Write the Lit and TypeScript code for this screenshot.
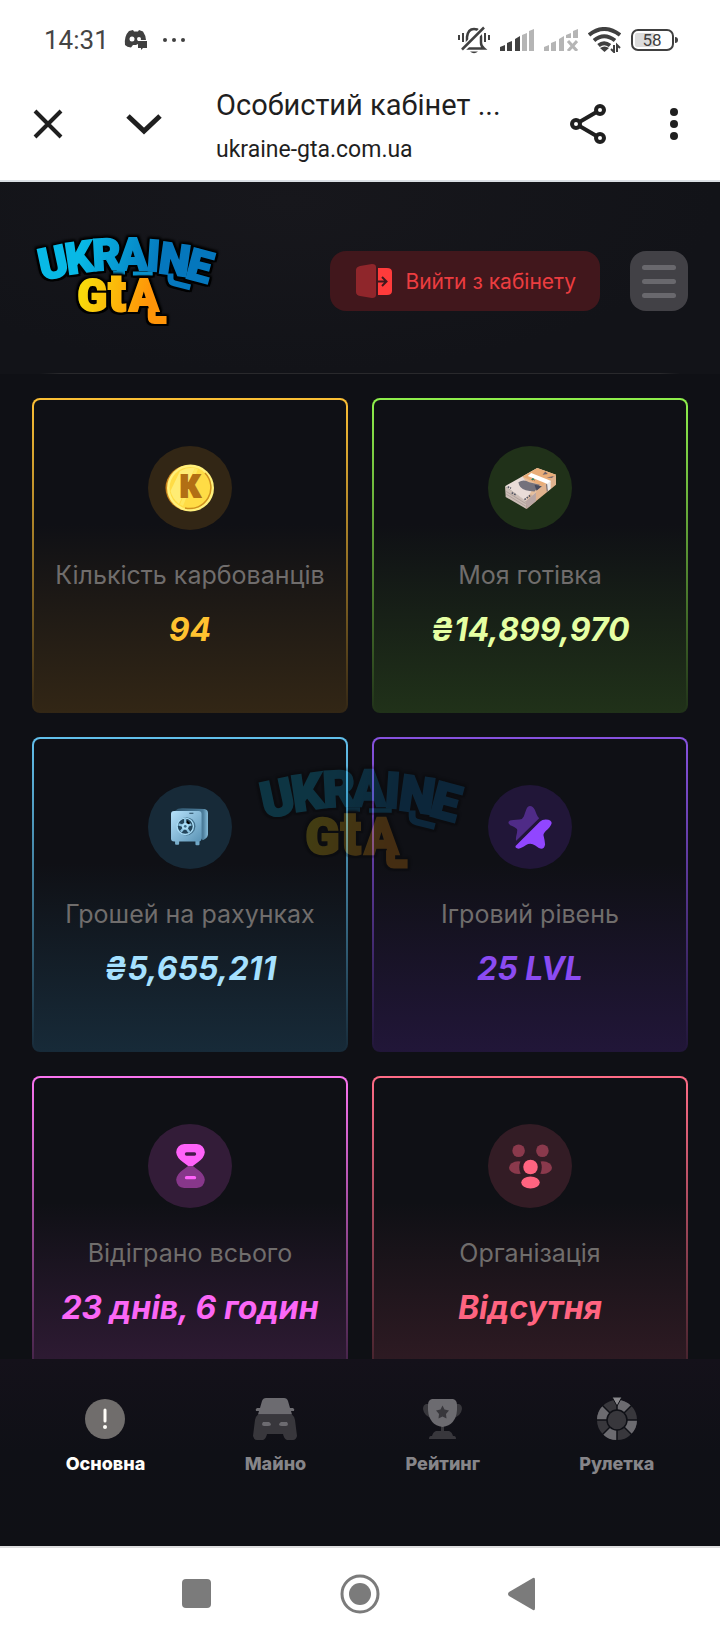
import {LitElement, html, css, svg} from 'lit';
import {customElement, property, state} from 'lit/decorators.js';
import {classMap} from 'lit/directives/class-map.js';

const icons = {
  coin: svg`
    <svg width="50" height="48" viewBox="0 0 50 48">
      <ellipse cx="24" cy="24" rx="23.5" ry="23" fill="#c9831c" />
      <ellipse cx="25.5" cy="24" rx="23.5" ry="23.5" fill="#fff07c" />
      <ellipse cx="25.5" cy="24" rx="21" ry="21" fill="#ffdc45" />
      <path d="M15 7 Q22 3 30 4 L14 40 Q7 34 5.500 27Z" fill="#ffec74" />
      <path d="M33 5 L18 42 L15 40.500 L30 4Z" fill="#ffe860" />
      <path d="M40 9 A21 21 0 0 1 20 44" fill="none" stroke="#cf901f" stroke-width="1.500" />
      <text x="25" y="33" font-family="Roboto, sans-serif" font-size="31" font-weight="900"
        text-anchor="middle" fill="#b26f14" stroke="#b26f14" stroke-width="2">К</text>
    </svg>`,
  money: svg`
    <svg width="51" height="41" viewBox="0 0 152 122">
      <path d="M0 54 L2 86 L64 122 L62 96Z" fill="#cbbcb6" />
      <path d="M62 96 L64 122 L152 50 V20Z" fill="#e0b28e" />
      <path d="M62 96 L64 122 L92 99 V72Z" fill="#b9a6a4" />
      <path d="M0 54 L96 0 L152 20 L62 98Z" fill="#e9dcd8" />
      <path d="M52 25 L96 0 L152 20 L92 72 L84 50Z" fill="#e9ad78" />
      <path d="M52 25 L88 44 L110 54 L92 72 L62 98 L80 66Z" fill="#e6bf9d" />
      <path d="M40 42 Q56 32 72 42 L104 50 L88 70 Q72 68 62 66 Q42 60 40 42Z" fill="#74727c" />
      <path d="M88 50 L110 54 L94 68Z" fill="#474a5c" />
      <path d="M112 20 L120 10 L128 18Z M124 28 L146 24 L140 30Z" fill="#70636c" />
      <path d="M68 24 L78 15 L136 38 L132 50Z" fill="#fff" />
      <path d="M124 48 L136 38 L136 62 L126 70Z" fill="#eceae9" />
      <path d="M124 48 L126 70" stroke="#665f65" stroke-width="3" fill="none" />
      <path d="M4 70 L62 106 M4 78 L62 114" stroke="#a3958f" stroke-width="2" fill="none" />
      <path d="M8 56 l10 4 M20 74 l12 6 M58 94 l20 -14 M80 33 l8 4" stroke="#555663" stroke-width="5" stroke-dasharray="5 3" />
      <path d="M78 34 l6 -4 l4 6 Z" fill="#1e8d63" />
    </svg>`,
  safe: svg`
    <svg width="38" height="38" viewBox="0 0 112 112">
      <defs>
        <linearGradient id="door" x1="0" y1="0" x2="1" y2="1">
          <stop offset="0" stop-color="#b6e2fb" />
          <stop offset="1" stop-color="#5a93b5" />
        </linearGradient>
        <linearGradient id="side" x1="0" y1="0" x2="1" y2="0">
          <stop offset="0" stop-color="#31566e" />
          <stop offset="0.850" stop-color="#4c7d9b" />
          <stop offset="1" stop-color="#88bedb" />
        </linearGradient>
      </defs>
      <path d="M12 8 Q20 0 36 1 L98 3 Q109 4 109 15 V78 Q108 88 94 95Z" fill="url(#side)" />
      <rect x="12" y="94" width="12" height="14" rx="3" fill="#79aecb" />
      <rect x="72" y="94" width="12" height="16" rx="3" fill="#6fa6c5" />
      <rect x="0" y="9" width="90" height="90" rx="9" fill="url(#door)" />
      <path d="M54 14 H66 V17 H54Z" fill="#24475e" />
      <circle cx="45" cy="54" r="27" fill="#42708c" />
      <circle cx="42" cy="54" r="24" fill="#23455b" stroke="#a9dcf6" stroke-width="4" />
      <path d="M42 32 V54 L60 48 M42 54 L54 72 M42 54 L29 70 M42 54 L22 48" stroke="#8cc4e2" stroke-width="7" />
      <circle cx="42" cy="54" r="10" fill="#a9dcf6" />
      <circle cx="42" cy="54" r="4" fill="#3b6985" />
    </svg>`,
  star: svg`
    <svg width="44" height="43" viewBox="0 0 132 131">
      <path d="M66 0C72 0 77 4 81 12C85 22 88 32 94 37L24 106Q22 104 24 92Q29 72 26 70Q22 66 6 59Q-5 50 5 44Q12 42 34 41Q44 40 47 32L54 12Q58 0 66 0Z" fill="#4f2b87" />
      <path d="M22 122L96 48Q103 41 114 41Q132 42 132 52Q131 60 120 71Q106 83 107 89Q111 104 112 117Q110 130 100 130Q93 129 82 120Q67 110 54 119Q40 129 31 130Q20 129 22 122Z" fill="#9146ff" />
    </svg>`,
  hourglass: svg`
    <svg width="29" height="44" viewBox="0 0 86 132">
      <path d="M24 0H62Q84 2 86 25Q84 42 66 54L50 66H36L20 54Q2 42 0 25Q2 2 24 0Z" fill="#ff62fa" />
      <path d="M24 132H62Q84 130 86 107Q84 90 66 78L50 66H36L20 78Q2 90 0 107Q2 130 24 132Z" fill="#87378a" />
      <rect x="26" y="25" width="34" height="10" rx="5" fill="#45194a" />
      <rect x="26" y="96" width="34" height="10" rx="5" fill="#ff62fa" />
    </svg>`,
  people: svg`
    <svg width="43" height="45" viewBox="0 0 130 135">
      <g fill="#8a394c">
        <circle cx="29" cy="20" r="19" />
        <circle cx="101" cy="20" r="19" />
        <ellipse cx="28" cy="71" rx="28" ry="19" />
        <ellipse cx="102" cy="71" rx="28" ry="19" />
      </g>
      <ellipse cx="65" cy="70" rx="34" ry="40" fill="#331c25" />
      <circle cx="65" cy="69" r="22" fill="#ff6480" />
      <ellipse cx="65" cy="116" rx="28" ry="18" fill="#ff6480" />
    </svg>`,
  main: svg`
    <svg width="40" height="40" viewBox="0 0 40 40">
      <circle cx="20" cy="20" r="20" fill="#706d6c" />
      <path d="M20 11V22" stroke="#fffdf8" stroke-width="3" stroke-linecap="round" />
      <circle cx="20" cy="28" r="2" fill="#fffdf8" />
    </svg>`,
  car: svg`
    <svg width="44" height="42" viewBox="0 0 44 42">
      <path d="M7 10L9 3Q10 0 13 0H31Q34 0 35 3L37 10H40Q42 11 41 13H38L39 16.500H5L6 13H3Q2 11 4 10Z" fill="#6c6b70" />
      <path d="M5 16.500H39Q41 18 42 22L44 38Q43 42 40 42H34Q31 41 30 36H14Q13 41 10 42H4Q1 42 0 38L2 22Q3 18 5 16.500Z" fill="#38373c" />
      <path d="M10 24H16Q18 25 18 27Q17 28 15 28H11Q9 28 9 26ZM34 24H28Q26 25 26 27Q27 28 29 28H33Q35 28 35 26Z" fill="#6c6b70" />
    </svg>`,
  trophy: svg`
    <svg width="39" height="40" viewBox="0 0 39 40">
      <path d="M7 5H3Q0 6 0 10Q1 17 9 19ZM32 5H36Q39 6 39 10Q38 17 30 19ZM18 26H21V32H18ZM13 32H26Q29 33 30 37H31Q33 37 33 40H6Q6 37 8 37H9Q10 33 13 32Z" fill="#38373c" />
      <path d="M9 0H30Q34 1 34 6V11Q33 26 19.500 28Q6 26 5 11V6Q5 1 9 0Z" fill="#6c6b70" />
      <path d="M19.500 6.500L21.500 10.500L26 11.500L23 15L23.500 19.500L19.500 17.500L15.500 19.500L16 15L13 11.500L17.500 10.500Z" fill="#38373c" />
    </svg>`,
  wheel: svg`
    <svg width="42" height="44" viewBox="0 0 42 44">
      <circle cx="21" cy="23" r="15" fill="none" stroke="#38373c" stroke-width="10" />
      <circle cx="21" cy="23" r="15" fill="none" stroke="#6c6b70" stroke-width="10" pathLength="8" stroke-dasharray="1 1" />
      <path d="M21 2V44M0 23H42M6 8L36 38M36 8L6 38" stroke="#0f1016" stroke-width="1.500" />
      <circle cx="21" cy="23" r="10" fill="#38373c" stroke="#0f1016" stroke-width="1.500" />
      <path d="M16 0H26L21 9Z" fill="#8a898d" stroke="#0f1016" />
    </svg>`,
};

interface Stat {
  label: string;
  value: string;
  icon: string;
  tone: string;
}

const stats: Stat[] = [
  {label: 'Кількість карбованців', value: '94', icon: 'coin', tone: 'gold'},
  {label: 'Моя готівка', value: '₴14,899,970', icon: 'money', tone: 'green'},
  {label: 'Грошей на рахунках', value: '₴5,655,211', icon: 'safe', tone: 'blue'},
  {label: 'Ігровий рівень', value: '25 LVL', icon: 'star', tone: 'purple'},
  {label: 'Відіграно всього', value: '23 днів, 6 годин', icon: 'hourglass', tone: 'pink'},
  {label: 'Організація', value: 'Відсутня', icon: 'people', tone: 'red'},
];

const tabs = [
  {id: 'main', label: 'Основна', icon: 'main'},
  {id: 'property', label: 'Майно', icon: 'car'},
  {id: 'rating', label: 'Рейтинг', icon: 'trophy'},
  {id: 'roulette', label: 'Рулетка', icon: 'wheel'},
];

@customElement('gta-logo')
export class GtaLogo extends LitElement {
  static styles = css`
    :host {
      display: block;
    }
    .logo {
      display: block;
      width: 100%;
      height: auto;
      overflow: visible;
    }
    /* four hard shadows add up to the black outline */
    .outlined {
      filter: drop-shadow(2px 0 0 #000) drop-shadow(-2px 0 0 #000)
        drop-shadow(0 2px 0 #000) drop-shadow(0 -2px 1px #000);
    }
    .letters {
      font-family: Roboto, sans-serif;
      font-weight: 900;
      stroke-width: 2px;
    }
    .top {
      font-size: 44px;
      fill: url(#sky);
      stroke: url(#sky);
    }
    .bottom {
      font-size: 44px;
      fill: url(#sun);
      stroke: url(#sun);
    }
    .tall {
      font-size: 52px;
    }
  `;

  render() {
    return html`
      <svg class="logo" viewBox="0 0 180 100" role="img" aria-label="Ukraine GTA">
        <defs>
          <linearGradient id="sky" gradientUnits="userSpaceOnUse" x1="50" y1="0" x2="130" y2="20">
            <stop offset="0" stop-color="#08b9e6" />
            <stop offset="1" stop-color="#0577bd" />
          </linearGradient>
          <linearGradient id="sun" gradientUnits="userSpaceOnUse" x1="50" y1="50" x2="115" y2="65">
            <stop offset="0" stop-color="#f8d90b" />
            <stop offset="1" stop-color="#ff9408" />
          </linearGradient>
        </defs>
        <g class="outlined">
          <text class="letters top" x="6 32 58 83 111 123 150" y="49 43 39 38 39 41 46" rotate="-12 -8 -3 0 4 8 15">UKRAINE</text>
          <path d="M136 42V47Q136 51 140 52L156 56" fill="none" stroke="#0577bd" stroke-width="6" />
          <path d="M78 41H90M98 42H118" stroke="#0891cb" stroke-width="4" />
        </g>
        <g class="outlined">
          <text class="letters bottom" y="80"><tspan x="42">G</tspan><tspan class="tall" x="73">t</tspan><tspan x="94">A</tspan></text>
          <path d="M117 77V86Q117 89 120 89H132" fill="none" stroke="#ff9408" stroke-width="8" />
        </g>
      </svg>
    `;
  }
}

@customElement('status-bar')
export class StatusBar extends LitElement {
  static styles = css`
    :host {
      display: flex;
      align-items: center;
      justify-content: space-between;
      height: 78px;
      box-sizing: border-box;
      padding: 2px 42px 0 44px;
      color: #444;
      background: #fff;
      font-family: Roboto, sans-serif;
    }
    .group {
      display: flex;
      align-items: center;
      gap: 10px;
    }
    .left {
      gap: 15px;
    }
    .time {
      font-size: 26px;
      line-height: 32px;
    }
    .battery-text {
      font-size: 17px;
    }
  `;

  render() {
    return html`
      <div class="group left">
        <span class="time">14:31</span>
        <svg width="24" height="20" viewBox="0 0 24 20" aria-hidden="true">
          <path d="M5 1L9 0L10 1.500H14L15 0L19 1.500Q22 6 22 10H14V14L12 15H9L7 17.500Q3 17 1 15Q0 6 5 1Z" fill="#404040" />
          <circle cx="8" cy="9" r="2.500" fill="#fff" />
          <circle cx="15" cy="9" r="2" fill="#fff" />
          <path d="M14 11H23V18H19L17 20V18H14Z" fill="#404040" />
        </svg>
        <svg width="24" height="6" viewBox="0 0 24 6" fill="#404040" aria-hidden="true">
          <circle cx="2" cy="3" r="2" /><circle cx="11" cy="3" r="2" /><circle cx="20" cy="3" r="2" />
        </svg>
      </div>
      <div class="group">
        <svg width="32" height="28" viewBox="0 0 32 28" fill="none" stroke="#404040" aria-hidden="true">
          <path d="M9 18V11Q10 3 16 3Q23 3 23 11V17Q23 20 26 22.500H7Q9 21 9 18Z" stroke-width="2.500" />
          <path d="M4 24L26 2" stroke="#fff" stroke-width="6" />
          <path d="M4 23.500L26 1.500" stroke-width="2.500" />
          <path d="M1 9V14M5 7V16M27 7V16M31 9V14" stroke-width="2" />
          <path d="M12 25.500H20Q16 29 12 25.500Z" fill="#404040" stroke="none" />
        </svg>
        <svg width="34" height="22" viewBox="0 0 34 22" aria-hidden="true">
          <path d="M0 22V18L5 16V22ZM7 22V14L12 12V22ZM15 22V10L20 7V22Z" fill="#404040" />
          <path d="M22 22V6L27 4V22ZM29 22V2L34 0V22Z" fill="#b5b5b5" />
        </svg>
        <svg width="34" height="22" viewBox="0 0 34 22" aria-hidden="true">
          <path d="M0 22V18L5 16V22ZM7 22V14L12 12V22ZM15 22V10L20 7V22ZM22 9V6L27 4V9ZM29 9V2L34 0V9Z" fill="#b5b5b5" />
          <path d="M24 12L33 22M33 12L24 22" stroke="#b5b5b5" stroke-width="3" />
        </svg>
        <svg width="33" height="26" viewBox="0 0 33 26" fill="none" stroke="#404040" stroke-width="4" aria-hidden="true">
          <path d="M1 8Q16 -4 32 8M6 13.500Q16 5 27 13.500M10.500 18.500Q16 14 22 18.500" />
          <path d="M16.500 25L12 21Q16.500 18 21 21Z" fill="#404040" stroke="none" />
          <path d="M26 18V25L23 22M29 25V18L32 21" stroke-width="2" />
        </svg>
        <svg width="47" height="22" viewBox="0 0 47 22" role="img" aria-label="Заряд 58%">
          <rect x="4" y="4" width="20" height="14" rx="2" fill="#dcdcdc" />
          <rect x="1" y="1" width="41" height="20" rx="6" fill="none" stroke="#404040" stroke-width="2" />
          <path d="M44 8Q47 8 47 11Q47 14 44 14Z" fill="#404040" />
          <text class="battery-text" x="21" y="17" text-anchor="middle" fill="#404040">58</text>
        </svg>
      </div>
    `;
  }
}

@customElement('stat-card')
export class StatCard extends LitElement {
  static styles = css`
    :host {
      display: block;
    }
    .card {
      display: flex;
      flex-direction: column;
      align-items: center;
      padding: 46px 8px 61px;
      border: 2px solid transparent;
      border-radius: 8px;
      background:
        linear-gradient(#0f1015 40%, var(--tint)) padding-box,
        linear-gradient(var(--edge), var(--tint)) border-box;
      text-align: center;
      white-space: nowrap;
    }
    .badge {
      display: grid;
      place-items: center;
      width: 84px;
      height: 84px;
      margin-bottom: 30px;
      border-radius: 50%;
      background: var(--tint);
    }
    .label {
      margin: 0 0 20px;
      color: #706d6c;
      font-size: 25px;
      font-weight: 400;
      line-height: 30px;
    }
    .value {
      margin: 0;
      color: var(--value);
      font-size: 32px;
      font-style: italic;
      font-weight: 700;
      line-height: 40px;
    }
    .gold {
      --edge: #fcc035;
      --tint: #322615;
      --value: #ffc230;
    }
    .green {
      --edge: #8ff04c;
      --tint: #203119;
      --value: #e5ffa3;
    }
    .blue {
      --edge: #62c0ec;
      --tint: #172a38;
      --value: #a6e1ff;
    }
    .purple {
      --edge: #8752e0;
      --tint: #211638;
      --value: #8b4bf2;
    }
    .pink {
      --edge: #fa74f0;
      --tint: #331c38;
      --value: #fb67f6;
    }
    .red {
      --edge: #ff6c86;
      --tint: #331c25;
      --value: #ff6480;
    }
  `;

  @property({attribute: false}) stat!: Stat;

  render() {
    return html`
      <article class="card ${this.stat.tone}">
        <div class="badge" aria-hidden="true">${icons[this.stat.icon]}</div>
        <h2 class="label">${this.stat.label}</h2>
        <p class="value">${this.stat.value}</p>
      </article>
    `;
  }
}

@customElement('app-root')
export class AppRoot extends LitElement {
  static styles = css`
    :host {
      position: relative;
      display: flex;
      flex-direction: column;
      height: 100vh;
      overflow: hidden;
      background: #0f1015;
      font-family: Inter, sans-serif;
    }
    button {
      padding: 0;
      border: 0;
      background: none;
      font: inherit;
      cursor: pointer;
    }
    button svg {
      display: block;
    }
    .browser {
      display: flex;
      align-items: center;
      height: 104px;
      box-sizing: border-box;
      padding: 0 40px 10px 32px;
      border-bottom: 2px solid #dadfe4;
      background: #fff;
      color: #1f1f1f;
      font-family: Roboto, sans-serif;
    }
    .collapse {
      margin: 0 52px 0 60px;
    }
    .page-info {
      flex: 1;
      min-width: 0;
      padding-top: 12px;
      white-space: nowrap;
    }
    .page-title {
      font-size: 29px;
      line-height: 40px;
    }
    .page-url {
      font-size: 23px;
      line-height: 50px;
    }
    .more {
      margin-left: 62px;
    }
    .site-header {
      display: flex;
      align-items: center;
      height: 192px;
      box-sizing: border-box;
      padding: 6px 32px 0 36px;
      background:
        linear-gradient(90deg, transparent 40px, #29292c 60px, #29292c calc(100% - 60px), transparent calc(100% - 40px)) bottom / 100% 1px no-repeat,
        radial-gradient(ellipse at 40% 10%, #17171c, #121318 70%);
    }
    .brand {
      width: 178px;
      margin-right: auto;
    }
    .logout {
      display: flex;
      align-items: center;
      gap: 13px;
      height: 60px;
      margin-right: 30px;
      padding: 0 24px 0 26px;
      border-radius: 16px;
      background: #41171c;
      color: #ec3d40;
      font-size: 21px;
    }
    .menu {
      display: flex;
      flex-direction: column;
      align-items: center;
      justify-content: center;
      gap: 9px;
      width: 58px;
      height: 60px;
      border-radius: 16px;
      background: #424146;
    }
    .menu-line {
      width: 34px;
      height: 5px;
      border-radius: 3px;
      background: #69686d;
    }
    .stats {
      display: grid;
      grid-template-columns: 1fr 1fr;
      align-content: start;
      gap: 24px;
      flex: 1;
      min-height: 0;
      padding: 24px 32px 0;
      overflow: hidden;
    }
    .tabs {
      display: flex;
      justify-content: space-around;
      height: 187px;
      box-sizing: border-box;
      padding: 38px 16px 0;
      background: linear-gradient(#14111a, #0f1016 50%, #0f1015);
    }
    .tab {
      display: flex;
      flex-direction: column;
      align-items: center;
      gap: 11px;
      color: #868589;
      font-size: 18px;
      font-weight: 800;
      line-height: 24px;
      text-decoration: none;
    }
    .tab.active {
      color: #fffefa;
    }
    .tab-icon {
      display: grid;
      place-items: center;
      height: 44px;
    }
    .system-nav {
      display: flex;
      align-items: center;
      justify-content: center;
      gap: 124px;
      height: 94px;
      box-sizing: border-box;
      border-top: 2px solid #dededf;
      background: #fff;
    }
    .watermark {
      position: absolute;
      inset: 0;
      display: grid;
      place-items: center;
      opacity: 0.22;
      pointer-events: none;
    }
    .watermark-logo {
      width: 204px;
    }
  `;

  @state() private activeTab = 'main';

  private selectTab(event: Event, id: string) {
    event.preventDefault();
    this.activeTab = id;
  }

  render() {
    return html`
      <status-bar></status-bar>
      <div class="browser">
        <button aria-label="Закрити">
          <svg width="32" height="32" viewBox="0 0 32 32" fill="none" stroke="#1f1f1f" stroke-width="4">
            <path d="M3 3L29 29M29 3L3 29" />
          </svg>
        </button>
        <button class="collapse" aria-label="Згорнути">
          <svg width="40" height="32" viewBox="0 0 40 32" fill="none" stroke="#1f1f1f" stroke-width="5">
            <path d="M4 8L20 23L36 8" />
          </svg>
        </button>
        <div class="page-info">
          <div class="page-title">Особистий кабінет ...</div>
          <div class="page-url">ukraine-gta.com.ua</div>
        </div>
        <button aria-label="Поділитися">
          <svg width="36" height="40" viewBox="0 0 36 40" fill="#fff" stroke="#1f1f1f" stroke-width="4">
            <path d="M30 6L6 20L30 34" fill="none" />
            <circle cx="30" cy="6" r="4" /><circle cx="6" cy="20" r="4" /><circle cx="30" cy="34" r="4" />
          </svg>
        </button>
        <button class="more" aria-label="Меню браузера">
          <svg width="12" height="32" viewBox="0 0 12 32" fill="#1f1f1f">
            <circle cx="6" cy="4" r="4" /><circle cx="6" cy="16" r="4" /><circle cx="6" cy="28" r="4" />
          </svg>
        </button>
      </div>

      <header class="site-header">
        <gta-logo class="brand"></gta-logo>
        <button class="logout">
          <svg width="36" height="34" viewBox="0 0 36 34" aria-hidden="true">
            <path d="M4 2L16 0Q20 0 20 3V31Q20 34 16 34L4 32Q0 31 0 28V6Q0 3 4 2Z" fill="#8f262b" />
            <path d="M22 4H31Q36 4 36 8V27Q36 31 31 31H22Z" fill="#ff3b3b" />
            <path d="M22 17.500H30M26 13L30.500 17.500L26 22" fill="none" stroke="#41171c" stroke-width="2" />
          </svg>
          <span>Вийти з кабінету</span>
        </button>
        <button class="menu" aria-label="Меню">
          <span class="menu-line"></span>
          <span class="menu-line"></span>
          <span class="menu-line"></span>
        </button>
      </header>

      <main class="stats">
        ${stats.map((stat) => html`<stat-card .stat=${stat}></stat-card>`)}
      </main>

      <nav class="tabs" aria-label="Розділи">
        ${tabs.map(
          (tab) => html`
            <a
              class=${classMap({tab: true, active: tab.id === this.activeTab})}
              href="#${tab.id}"
              @click=${(event: Event) => this.selectTab(event, tab.id)}
            >
              <span class="tab-icon" aria-hidden="true">${icons[tab.icon]}</span>
              ${tab.label}
            </a>
          `
        )}
      </nav>

      <div class="system-nav">
        <button aria-label="Останні програми">
          <svg width="40" height="40" viewBox="0 0 40 40" fill="#7b7b7b">
            <rect x="6" y="5" width="29" height="29" rx="4" />
          </svg>
        </button>
        <button aria-label="Головний екран">
          <svg width="40" height="40" viewBox="0 0 40 40" fill="#7b7b7b">
            <circle cx="20" cy="20" r="18" fill="none" stroke="#7b7b7b" stroke-width="3" />
            <circle cx="20" cy="20" r="11" />
          </svg>
        </button>
        <button aria-label="Назад">
          <svg width="40" height="40" viewBox="0 0 40 40" fill="#7b7b7b">
            <path d="M29 4Q31 3 31 6V34Q31 37 29 36L5 22Q3 20 5 18Z" />
          </svg>
        </button>
      </div>

      <div class="watermark" aria-hidden="true">
        <gta-logo class="watermark-logo"></gta-logo>
      </div>
    `;
  }
}
